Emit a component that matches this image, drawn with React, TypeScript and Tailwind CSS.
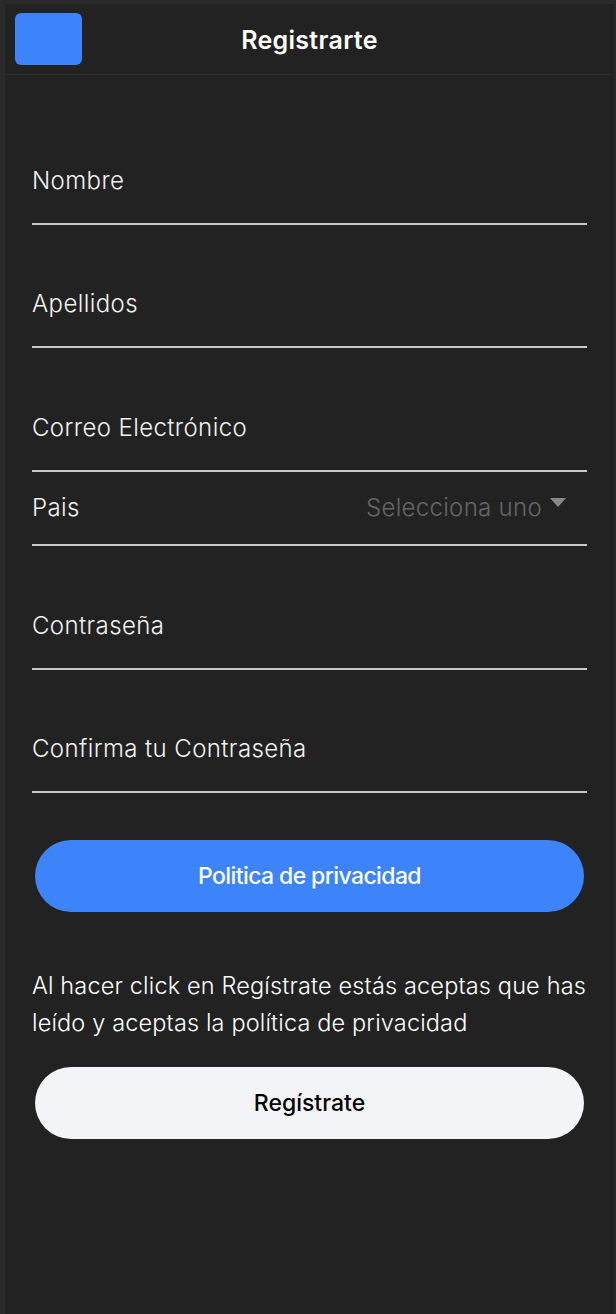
import { useState } from 'react';

const fields = [
  { key: 'nombre', label: 'Nombre', h: 'h-[122px]' },
  { key: 'apellidos', label: 'Apellidos', h: 'h-[123px]' },
  { key: 'correo', label: 'Correo Electrónico', h: 'h-[124px]' },
];

const passwordFields = [
  { key: 'password', label: 'Contraseña', h: 'h-[124px]' },
  { key: 'confirm', label: 'Confirma tu Contraseña', h: 'h-[123px]' },
];

const FieldRow = (props: { label: string; h: string }) => {
  return (
    <div className={`${props.h} flex items-end pb-[28px] border-b-2 border-[#c9c9c9]`}>
      <p className="text-[24px] leading-[28px] font-light tracking-[0.4px] text-[#f2f2f2]">{props.label}</p>
    </div>
  );
};

const CountryRow = () => {
  const [country] = useState('');
  return (
    <div className="h-[74px] flex items-center justify-between border-b-2 border-[#c9c9c9]">
      <p className="text-[24px] leading-[28px] font-light tracking-[0.4px] text-[#f2f2f2]">Pais</p>
      <div className="flex items-center gap-[8px] pr-[21px]">
        <span className="text-[24px] leading-[28px] font-light tracking-[0.3px] text-[#666666]">
          {country || 'Selecciona uno'}
        </span>
        <svg width="16" height="9" viewBox="0 0 16 9" className="mb-[12px]">
          <path d="M0 0 L16 0 L8 9 Z" fill="#888888" />
        </svg>
      </div>
    </div>
  );
};

const App = () => {
  return (
    <div
      className="w-[616px] h-[1314px] bg-[#2a2a2a] pl-[5px] pr-[2px] pt-[4px]"
      style={{ fontFamily: 'Inter, "Noto Sans", sans-serif' }}
    >
      <div className="h-full bg-[#222222] flex flex-col">
        <header className="h-[71px] grid grid-cols-[1fr_auto_1fr] items-center px-[10px] border-b border-[#2b2b2b]">
          <div className="w-[67px] h-[52px] rounded-[6px] bg-[#3d84fb]" />
          <h1 className="text-[25px] leading-[30px] pt-[2px] font-semibold text-white tracking-[0.3px]">Registrarte</h1>
          <div />
        </header>

        <div className="px-[27px] pt-[28px] flex flex-col">
          {fields.map((f) => (
            <FieldRow key={f.key} label={f.label} h={f.h} />
          ))}
          <CountryRow />
          {passwordFields.map((f) => (
            <FieldRow key={f.key} label={f.label} h={f.h} />
          ))}

          <button className="mt-[47px] mx-[3px] h-[72px] rounded-full bg-[#3d84fb] text-white text-[23px] font-medium tracking-[-0.6px]">
            Politica de privacidad
          </button>

          <p className="mt-[55px] -mr-[4px] text-[23.5px] leading-[37px] font-light tracking-[0.15px] text-white">
            Al hacer click en Regístrate estás aceptas que has leído y aceptas la política de privacidad
          </p>

          <button className="mt-[26px] mx-[3px] h-[72px] rounded-full bg-[#f3f4f8] text-black text-[23px] font-medium">
            Regístrate
          </button>
        </div>
      </div>
    </div>
  );
};

export default App;
